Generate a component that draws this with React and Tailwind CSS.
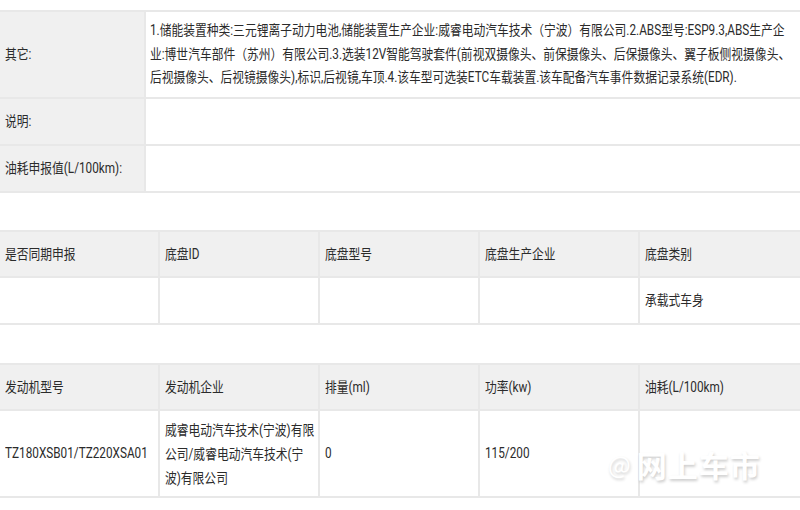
const line = "#e8e8e8";

function Txt({ children }) {
  return (
    <span className="inline-block origin-left scale-x-[0.84] whitespace-nowrap">{children}</span>
  );
}

function Cell({ children, last, className = "" }) {
  return (
    <div className={`flex items-center pl-[5px] ${last ? "" : "border-r-2 border-[#e8e8e8]"} ${className}`}>
      {children ? <Txt>{children}</Txt> : null}
    </div>
  );
}

export default function App() {
  const font = { fontFamily: 'Roboto, "Noto Sans CJK SC", sans-serif' };

  const chassisHead = ["是否同期申报", "底盘ID", "底盘型号", "底盘生产企业", "底盘类别"];
  const chassisBody = ["", "", "", "", "承载式车身"];
  const engineHead = ["发动机型号", "发动机企业", "排量(ml)", "功率(kw)", "油耗(L/100km)"];

  return (
    <div
      className="relative w-[800px] h-[510px] bg-white text-[#2b2b2b] text-[14px] overflow-hidden"
      style={font}
    >
      {/* basic info */}
      <div className="mt-[10px] border-t-2 border-[#e8e8e8]">
        <div className="flex h-[87px] border-b-2 border-[#e8e8e8]">
          <div className="w-[146px] shrink-0 flex items-center pl-[5px] bg-[#f0f0f0] border-r-2 border-[#e8e8e8]">
            <Txt>其它:</Txt>
          </div>
          <div className="flex flex-col justify-center pl-[4px] leading-[23.5px]">
            <Txt>1.储能装置种类:三元锂离子动力电池,储能装置生产企业:威睿电动汽车技术（宁波）有限公司.2.ABS型号:ESP9.3,ABS生产企</Txt>
            <Txt>业:博世汽车部件（苏州）有限公司.3.选装12V智能驾驶套件(前视双摄像头、前保摄像头、后保摄像头、翼子板侧视摄像头、</Txt>
            <Txt>后视摄像头、后视镜摄像头),标识,后视镜,车顶.4.该车型可选装ETC车载装置.该车配备汽车事件数据记录系统(EDR).</Txt>
          </div>
        </div>
        <div className="flex h-[47px] border-b-2 border-[#e8e8e8]">
          <div className="w-[146px] shrink-0 flex items-center pl-[5px] bg-[#f0f0f0] border-r-2 border-[#e8e8e8]">
            <Txt>说明:</Txt>
          </div>
          <div className="flex-1" />
        </div>
        <div className="flex h-[47px] border-b-2 border-[#e8e8e8]">
          <div className="w-[146px] shrink-0 flex items-center pl-[5px] bg-[#f0f0f0] border-r-2 border-[#e8e8e8]">
            <Txt>油耗申报值(L/100km):</Txt>
          </div>
          <div className="flex-1" />
        </div>
      </div>

      {/* chassis */}
      <div className="mt-[37px] border-t-2 border-[#e8e8e8]">
        <div className="grid grid-cols-5 h-[46px] bg-[#f0f0f0] border-b-2 border-[#e8e8e8]">
          {chassisHead.map((t, i) => (
            <Cell key={t} last={i === 4}>{t}</Cell>
          ))}
        </div>
        <div className="grid grid-cols-5 h-[47px] border-b-2 border-[#e8e8e8]">
          {chassisBody.map((t, i) => (
            <Cell key={i} last={i === 4}>{t}</Cell>
          ))}
        </div>
      </div>

      {/* engine */}
      <div className="mt-[38px] border-t-2 border-[#e8e8e8]">
        <div className="grid grid-cols-5 h-[46px] bg-[#f0f0f0] border-b-2 border-[#e8e8e8]">
          {engineHead.map((t, i) => (
            <Cell key={t} last={i === 4}>{t}</Cell>
          ))}
        </div>
        <div className="grid grid-cols-5 h-[87px] border-b-2 border-[#e8e8e8]">
          <Cell>TZ180XSB01/TZ220XSA01</Cell>
          <div className="flex flex-col justify-center pl-[5px] leading-[24px] border-r-2 border-[#e8e8e8]">
            <Txt>威睿电动汽车技术(宁波)有限</Txt>
            <Txt>公司/威睿电动汽车技术(宁</Txt>
            <Txt>波)有限公司</Txt>
          </div>
          <Cell>0</Cell>
          <Cell>115/200</Cell>
          <Cell last />
        </div>
      </div>

      {/* watermark */}
      <div
        className="absolute left-[608px] top-[446px] flex items-center gap-[6px] text-white font-bold"
        style={{ fontFamily: '"Noto Sans CJK SC", sans-serif', textShadow: "1px 2px 3px rgba(0,0,0,0.2)" }}
      >
        <span className="text-[24px] font-normal">@</span>
        <span className="text-[30px] leading-none tracking-[1px]">网上车市</span>
      </div>
    </div>
  );
}
